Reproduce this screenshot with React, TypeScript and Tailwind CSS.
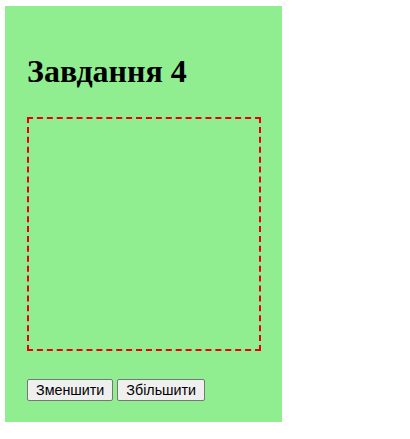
export default function App() {
  return (
    <div className="pl-[5px] pt-[6px]">
      <div className="flex h-[416px] w-[277px] flex-col bg-[#90ee90] px-[22px] pt-[47px]">
        <h1 className="font-['Liberation_Serif',serif] text-[32px] font-bold leading-[37px] text-black">
          Завдання 4
        </h1>
        <div className="mt-[27px] h-[234px] w-[234px] border-2 border-dashed border-red-600"></div>
        <div className="mt-[28px] flex gap-[4px] font-['Liberation_Sans',Arial,sans-serif] text-[14.3px] text-black">
          <button className="rounded-[2px] border border-[#767676] bg-[#efefef] px-[8px] py-[1px] leading-[18px]">
            Зменшити
          </button>
          <button className="rounded-[2px] border border-[#767676] bg-[#efefef] px-[8px] py-[1px] leading-[18px]">
            Збільшити
          </button>
        </div>
      </div>
    </div>
  );
}
